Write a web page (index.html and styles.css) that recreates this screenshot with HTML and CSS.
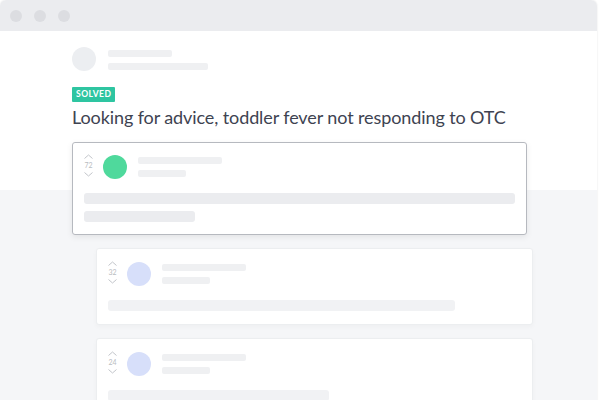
FILE: index.html
```html
<!DOCTYPE html>
<html lang="en">
<head>
    <meta charset="UTF-8">
    <title>Solved thread</title>
    <link rel="stylesheet" href="styles.css">
</head>
<body>
    <div class="window">
        <div class="titlebar">
            <span class="dot"></span>
            <span class="dot"></span>
            <span class="dot"></span>
        </div>
        <div class="page">
            <div class="author">
                <div class="avatar"></div>
                <div class="lines">
                    <div class="line name"></div>
                    <div class="line meta-wide"></div>
                </div>
            </div>
            <span class="badge">SOLVED</span>
            <h1 class="title">Looking for advice, toddler fever not responding to OTC</h1>

            <div class="card main">
                <div class="card-head">
                    <div class="vote">
                        <svg width="9" height="5" viewBox="0 0 9 5"><path d="M0.5 4.5 L4.5 1 L8.5 4.5" /></svg>
                        <span>72</span>
                        <svg width="9" height="5" viewBox="0 0 9 5"><path d="M0.5 0.5 L4.5 4 L8.5 0.5" /></svg>
                    </div>
                    <div class="avatar green"></div>
                    <div class="lines">
                        <div class="line name"></div>
                        <div class="line meta"></div>
                    </div>
                </div>
                <div class="body">
                    <div class="bar full"></div>
                    <div class="bar short"></div>
                </div>
            </div>

            <div class="replies">
                <div class="card reply">
                    <div class="card-head">
                        <div class="vote">
                            <svg width="9" height="5" viewBox="0 0 9 5"><path d="M0.5 4.5 L4.5 1 L8.5 4.5" /></svg>
                            <span>32</span>
                            <svg width="9" height="5" viewBox="0 0 9 5"><path d="M0.5 0.5 L4.5 4 L8.5 0.5" /></svg>
                        </div>
                        <div class="avatar blue"></div>
                        <div class="lines">
                            <div class="line name"></div>
                            <div class="line meta"></div>
                        </div>
                    </div>
                    <div class="body">
                        <div class="bar reply-long"></div>
                    </div>
                </div>

                <div class="card reply">
                    <div class="card-head">
                        <div class="vote">
                            <svg width="9" height="5" viewBox="0 0 9 5"><path d="M0.5 4.5 L4.5 1 L8.5 4.5" /></svg>
                            <span>24</span>
                            <svg width="9" height="5" viewBox="0 0 9 5"><path d="M0.5 0.5 L4.5 4 L8.5 0.5" /></svg>
                        </div>
                        <div class="avatar blue"></div>
                        <div class="lines">
                            <div class="line name"></div>
                            <div class="line meta"></div>
                        </div>
                    </div>
                    <div class="body">
                        <div class="bar reply-mid"></div>
                    </div>
                </div>
            </div>
        </div>
    </div>
</body>
</html>
```

FILE: styles.css
```css
body {
    margin: 0;
    background: #fff;
    font-family: 'Lato', sans-serif;
    height: 400px;
    overflow: hidden;
}
.window {
    width: 597px;
    height: 420px;
    border-radius: 6px 6px 0 0;
    overflow: hidden;
    box-shadow: 0 0 2px rgba(0, 0, 0, 0.12);
}
.titlebar {
    height: 31px;
    background: #ebecef;
    display: flex;
    align-items: center;
    gap: 12px;
    padding-left: 10px;
}
.dot {
    width: 12px;
    height: 12px;
    border-radius: 50%;
    background: #dcdde1;
}
.page {
    background: linear-gradient(#fff 0, #fff 159px, #f5f6f8 159px);
    padding: 16px 0 0 72px;
    height: 389px;
}
.author {
    display: flex;
    gap: 12px;
}
.avatar {
    width: 24px;
    height: 24px;
    border-radius: 50%;
    background: #eceef1;
    flex-shrink: 0;
}
.avatar.green {
    background: #4fd99c;
}
.avatar.blue {
    background: #d7dffa;
}
.lines {
    display: flex;
    flex-direction: column;
    gap: 6px;
    padding-top: 3px;
}
.line {
    height: 7px;
    border-radius: 2px;
    background: #eff0f2;
}
.line.name {
    width: 84px;
}
.line.meta {
    width: 48px;
}
.author .line.name {
    width: 64px;
}
.line.meta-wide {
    width: 100px;
}
.badge {
    display: inline-block;
    margin-top: 16px;
    height: 15px;
    line-height: 15px;
    padding: 0 4px;
    background: #2ec5a1;
    color: #fff;
    font-size: 8.5px;
    font-weight: 700;
    letter-spacing: 0.5px;
    border-radius: 1px;
}
.title {
    margin: 3px 0 13px;
    font-size: 18px;
    line-height: 24px;
    font-weight: 400;
    letter-spacing: -0.1px;
    color: #3e4351;
}
.card {
    background: #fff;
    border-radius: 3px;
}
.card.main {
    width: 431px;
    padding: 11px 11px 12px;
    border: 1.5px solid #b6b9bf;
    box-shadow: 0 2px 6px rgba(0, 0, 0, 0.08);
}
.card-head {
    display: flex;
    align-items: flex-start;
}
.vote {
    width: 9px;
    display: flex;
    flex-direction: column;
    align-items: center;
    gap: 3px;
    margin-right: 10px;
}
.vote svg path {
    fill: none;
    stroke: #c2c5ca;
    stroke-width: 1;
}
.vote span {
    font-size: 7px;
    line-height: 7px;
    color: #b9bcc1;
}
.card-head .avatar {
    margin-top: 1px;
    margin-right: 11px;
}
.body {
    margin-top: 14px;
    display: flex;
    flex-direction: column;
    gap: 7px;
}
.bar {
    height: 11px;
    border-radius: 3px;
    background: #ebecef;
}
.bar.full {
    width: 100%;
}
.bar.short {
    width: 111px;
}
.replies {
    margin: 13px 0 0 24px;
    display: flex;
    flex-direction: column;
    gap: 13px;
}
.card.reply {
    width: 413px;
    padding: 12px 11px 13px;
    border: 1px solid #eceef0;
    box-shadow: 0 2px 5px rgba(0, 0, 0, 0.03);
}
.card.reply .bar {
    background: #f1f2f4;
}
.bar.reply-long {
    width: 347px;
}
.bar.reply-mid {
    width: 221px;
}
```
